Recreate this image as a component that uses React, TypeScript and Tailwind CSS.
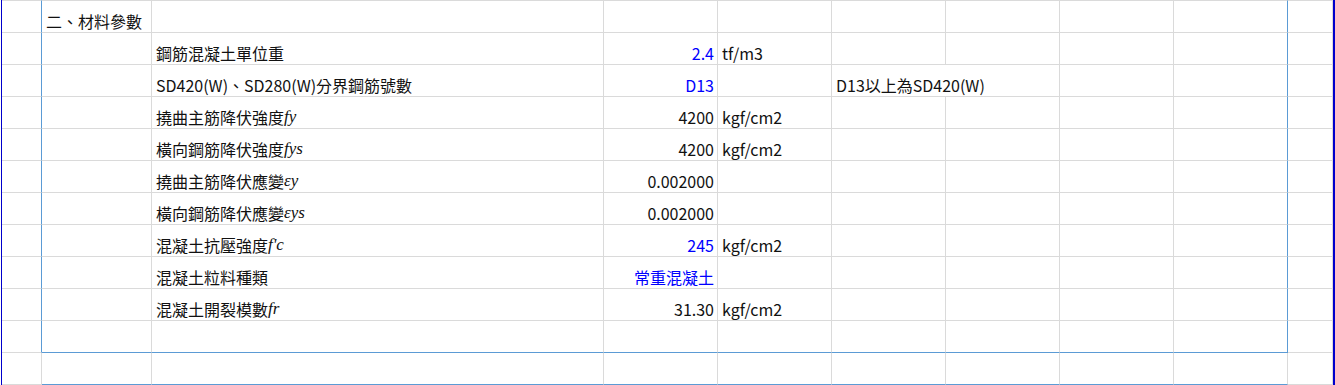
import React from "react";
import clsx from "clsx";

type Row = {
  title?: string;
  label?: string;
  sym?: string;
  value?: string;
  blue?: boolean;
  unit?: string;
  note?: string;
};

const ROWS: Row[] = [
  { title: "二、材料參數" },
  { label: "鋼筋混凝土單位重", value: "2.4", blue: true, unit: "tf/m3" },
  {
    label: "SD420(W)、SD280(W)分界鋼筋號數",
    value: "D13",
    blue: true,
    note: "D13以上為SD420(W)",
  },
  { label: "撓曲主筋降伏強度", sym: "fy", value: "4200", unit: "kgf/cm2" },
  { label: "橫向鋼筋降伏強度", sym: "fys", value: "4200", unit: "kgf/cm2" },
  { label: "撓曲主筋降伏應變", sym: "εy", value: "0.002000" },
  { label: "橫向鋼筋降伏應變", sym: "εys", value: "0.002000" },
  { label: "混凝土抗壓強度", sym: "f'c", value: "245", blue: true, unit: "kgf/cm2" },
  { label: "混凝土粒料種類", value: "常重混凝土", blue: true },
  { label: "混凝土開裂模數", sym: "fr", value: "31.30", unit: "kgf/cm2" },
  {},
  {},
];

function Cell({
  r,
  c,
  span,
  align = "left",
  children,
}: {
  r: number;
  c: number;
  span?: boolean;
  align?: "left" | "right";
  children?: React.ReactNode;
}) {
  // selection box: cols 1..8, rows 0..10; second box bottom on row 11
  const blueRight = (c === 0 || c === 8) && r <= 10;
  const blueBottom = c >= 1 && c <= 8 && (r === 10 || r === 11);
  return (
    <div
      className={clsx(
        "flex items-end whitespace-nowrap overflow-visible border-r border-b border-[#dadada] pb-[3px]",
        r === 0 ? "h-[33px] border-t" : "h-[32px]",
        blueRight && "border-r-[#5b9bd5]",
        blueBottom && "border-b-[#5b9bd5]",
        span && "col-span-2",
        align === "right" ? "justify-end pr-[3px]" : "pl-[4px]"
      )}
    >
      {children}
    </div>
  );
}

export default function App() {
  return (
    <div className="flex h-[385px] w-[1335px] overflow-hidden bg-white font-['Noto_Sans_CJK_TC','Noto_Sans_CJK_JP',sans-serif] text-[16px] leading-none text-[#111]">
      <div className="w-px" />
      <div className="w-px bg-[#0000cc]" />
      <div className="grid flex-1 grid-cols-[40px_110px_452px_114px_114px_114px_114px_114px_114px_1fr] content-start">
        {ROWS.map((row, r) => {
          const cells: React.ReactNode[] = [];
          for (let c = 0; c < 10; c++) {
            if (c === 1) {
              cells.push(
                <Cell key={c} r={r} c={c}>
                  {row.title}
                </Cell>
              );
            } else if (c === 2) {
              cells.push(
                <Cell key={c} r={r} c={c}>
                  {row.label}
                  {row.sym && (
                    <span className="font-['Liberation_Serif',serif] text-[17px] italic">
                      {row.sym}
                    </span>
                  )}
                </Cell>
              );
            } else if (c === 3) {
              cells.push(
                <Cell key={c} r={r} c={c} align="right">
                  <span className={row.blue ? "text-[#0000ff]" : ""}>
                    {row.value}
                  </span>
                </Cell>
              );
            } else if (c === 4) {
              cells.push(
                <Cell key={c} r={r} c={c}>
                  {row.unit}
                </Cell>
              );
            } else if (c === 5 && row.note) {
              cells.push(
                <Cell key={c} r={r} c={6} span>
                  {row.note}
                </Cell>
              );
              c++;
            } else {
              cells.push(<Cell key={c} r={r} c={c} />);
            }
          }
          return <React.Fragment key={r}>{cells}</React.Fragment>;
        })}
      </div>
      <div className="w-[2px] bg-[#0000cc]" />
    </div>
  );
}
